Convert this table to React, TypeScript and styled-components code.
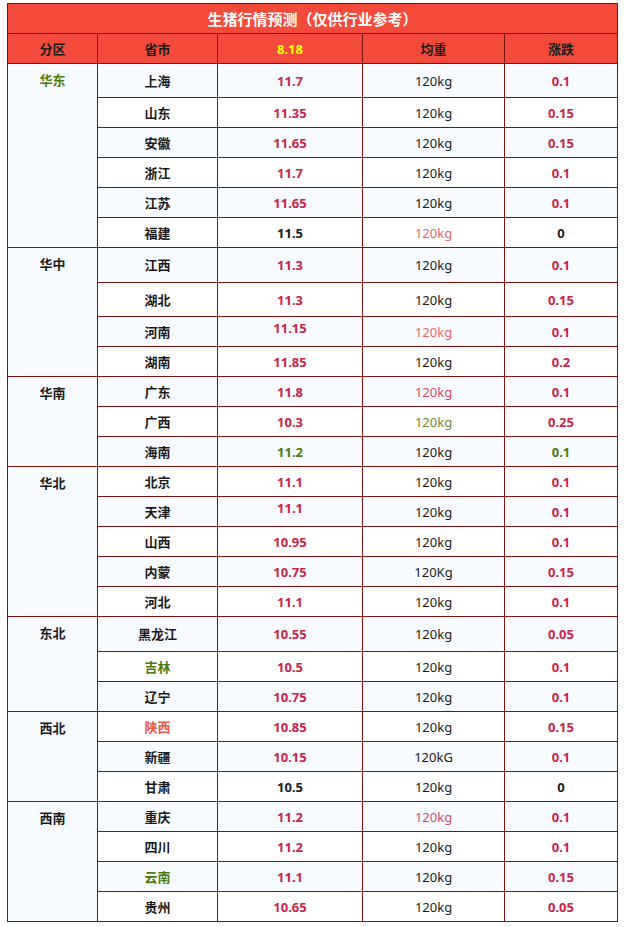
import React from "react";
import styled, { createGlobalStyle } from "styled-components";

const Global = createGlobalStyle`
  html, body { margin: 0; padding: 0; background: #ffffff; }
  body { font-family: "Noto Sans", "Noto Sans CJK SC", sans-serif; }
`;

const C = {
  head: "#f44a3b",
  border: "#7a1212",
  light: "#f7faff",
  red: "#c9234c",
  green: "#4b7a10",
  olive: "#6b8a3a",
  lightRed: "#e8646a",
  pink: "#d34a72",
  shaanxi: "#f0564c",
  ink: "#1a1a1a",
  yellow: "#ffff00",
};

const Page = styled.div`
  padding: 3px 0 0 7px;
`;

const Table = styled.table`
  border-collapse: collapse;
  table-layout: fixed;
  width: 610px;
  font-size: 13px;
  line-height: 18px;
  color: ${C.ink};
  td, th { border: 1px solid ${C.border}; padding: 0; text-align: center; }
`;

const TitleCell = styled.th`
  background: ${C.head};
  color: #ffffff;
  font-size: 15px;
  font-weight: 700;
  height: 29px;
  font-family: "Noto Sans CJK SC", sans-serif;
`;

const HeadCell = styled.th<{ $yellow?: boolean }>`
  background: ${C.head};
  color: ${(p) => (p.$yellow ? C.yellow : C.ink)};
  font-weight: 700;
  height: 29px;
  font-family: ${(p) => (p.$yellow ? `"Noto Sans", sans-serif` : `"Noto Sans CJK SC", sans-serif`)};
`;

const Row = styled.tr<{ $h: number; $light: boolean }>`
  height: ${(p) => p.$h}px;
  background: ${(p) => (p.$light ? C.light : "#ffffff")};
`;

const RegionCell = styled.td<{ $color: string }>`
  background: ${C.light};
  vertical-align: top;
  padding-top: 7px !important;
  font-weight: 700;
  color: ${(p) => p.$color};
  font-family: "Noto Sans CJK SC", sans-serif;
`;

const ProvCell = styled.td<{ $color: string }>`
  font-weight: 700;
  color: ${(p) => p.$color};
  font-family: "Noto Sans CJK SC", sans-serif;
`;

const NumCell = styled.td<{ $color: string; $raise?: number; $bold?: boolean }>`
  font-weight: ${(p) => (p.$bold === false ? 400 : 700)};
  color: ${(p) => p.$color};
  span {
    position: relative;
    top: ${(p) => -(p.$raise || 0)}px;
  }
`;

type Item = {
  p: string;
  pc?: string;
  price: string;
  prc?: string;
  praise?: number;
  w: string;
  wc?: string;
  ch: string;
  cc?: string;
  h?: number;
};

type Region = { name: string; color?: string; items: Item[] };

const data: Region[] = [
  {
    name: "华东",
    color: C.green,
    items: [
      { p: "上海", price: "11.7", w: "120kg", ch: "0.1", h: 34 },
      { p: "山东", price: "11.35", w: "120kg", ch: "0.15" },
      { p: "安徽", price: "11.65", w: "120kg", ch: "0.15" },
      { p: "浙江", price: "11.7", w: "120kg", ch: "0.1" },
      { p: "江苏", price: "11.65", w: "120kg", ch: "0.1" },
      { p: "福建", price: "11.5", prc: C.ink, w: "120kg", wc: C.lightRed, ch: "0", cc: C.ink },
    ],
  },
  {
    name: "华中",
    items: [
      { p: "江西", price: "11.3", w: "120kg", ch: "0.1", h: 35 },
      { p: "湖北", price: "11.3", w: "120kg", ch: "0.15", h: 34 },
      { p: "河南", price: "11.15", praise: 4, w: "120kg", wc: C.lightRed, ch: "0.1" },
      { p: "湖南", price: "11.85", w: "120kg", ch: "0.2" },
    ],
  },
  {
    name: "华南",
    items: [
      { p: "广东", price: "11.8", w: "120kg", wc: C.pink, ch: "0.1" },
      { p: "广西", price: "10.3", w: "120kg", wc: C.olive, ch: "0.25" },
      { p: "海南", price: "11.2", prc: C.green, w: "120kg", ch: "0.1", cc: C.green },
    ],
  },
  {
    name: "华北",
    items: [
      { p: "北京", price: "11.1", w: "120kg", ch: "0.1" },
      { p: "天津", price: "11.1", praise: 4, w: "120kg", ch: "0.1" },
      { p: "山西", price: "10.95", w: "120kg", ch: "0.1" },
      { p: "内蒙", price: "10.75", w: "120Kg", ch: "0.15" },
      { p: "河北", price: "11.1", w: "120kg", ch: "0.1" },
    ],
  },
  {
    name: "东北",
    items: [
      { p: "黑龙江", price: "10.55", w: "120kg", ch: "0.05", h: 35 },
      { p: "吉林", pc: C.green, price: "10.5", w: "120kg", ch: "0.1" },
      { p: "辽宁", price: "10.75", w: "120kg", ch: "0.1" },
    ],
  },
  {
    name: "西北",
    items: [
      { p: "陕西", pc: C.shaanxi, price: "10.85", w: "120kg", ch: "0.15" },
      { p: "新疆", price: "10.15", w: "120kG", ch: "0.1" },
      { p: "甘肃", price: "10.5", prc: C.ink, w: "120kg", ch: "0", cc: C.ink },
    ],
  },
  {
    name: "西南",
    items: [
      { p: "重庆", price: "11.2", w: "120kg", wc: C.pink, ch: "0.1" },
      { p: "四川", price: "11.2", w: "120kg", ch: "0.1" },
      { p: "云南", pc: C.green, price: "11.1", w: "120kg", ch: "0.15" },
      { p: "贵州", price: "10.65", w: "120kg", ch: "0.05" },
    ],
  },
];

export default function App() {
  let idx = 0;
  return (
    <Page>
      <Global />
      <Table>
        <colgroup>
          <col style={{ width: 90 }} />
          <col style={{ width: 120 }} />
          <col style={{ width: 145 }} />
          <col style={{ width: 142 }} />
          <col style={{ width: 113 }} />
        </colgroup>
        <thead>
          <tr>
            <TitleCell colSpan={5}>生猪行情预测（仅供行业参考）</TitleCell>
          </tr>
          <tr>
            <HeadCell>分区</HeadCell>
            <HeadCell>省市</HeadCell>
            <HeadCell $yellow>8.18</HeadCell>
            <HeadCell>均重</HeadCell>
            <HeadCell>涨跌</HeadCell>
          </tr>
        </thead>
        <tbody>
          {data.map((r) =>
            r.items.map((it, i) => {
              const light = idx % 2 === 0;
              idx++;
              return (
                <Row key={r.name + it.p} $h={it.h || 30} $light={light}>
                  {i === 0 && (
                    <RegionCell rowSpan={r.items.length} $color={r.color || C.ink}>
                      {r.name}
                    </RegionCell>
                  )}
                  <ProvCell $color={it.pc || C.ink}>{it.p}</ProvCell>
                  <NumCell $color={it.prc || C.red} $raise={it.praise}>
                    <span>{it.price}</span>
                  </NumCell>
                  <NumCell $color={it.wc || C.ink} $bold={false}>
                    <span>{it.w}</span>
                  </NumCell>
                  <NumCell $color={it.cc || C.red}>
                    <span>{it.ch}</span>
                  </NumCell>
                </Row>
              );
            })
          )}
        </tbody>
      </Table>
    </Page>
  );
}
